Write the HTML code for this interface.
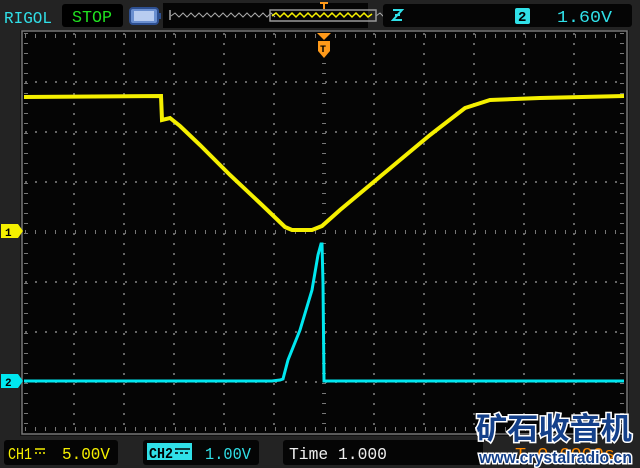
<!DOCTYPE html>
<html><head><meta charset="utf-8"><style>
body{margin:0;background:#202020;width:640px;height:468px;overflow:hidden;font-family:"Liberation Mono",monospace}
svg{display:block}
</style></head><body>
<svg width="640" height="468" viewBox="0 0 640 468" xmlns="http://www.w3.org/2000/svg">
<rect width="640" height="468" fill="#232323"/>
<rect x="20" y="30" width="609" height="406" fill="#111"/>
<rect x="22" y="31" width="605" height="403" fill="#050505" stroke="#777" stroke-width="1.5"/>
<g stroke="#666" stroke-width="2" stroke-dasharray="2 8">
<line x1="25" y1="82" x2="624" y2="82"/>
<line x1="25" y1="132" x2="624" y2="132"/>
<line x1="25" y1="182" x2="624" y2="182"/>
<line x1="25" y1="282" x2="624" y2="282"/>
<line x1="25" y1="332" x2="624" y2="332"/>
<line x1="25" y1="382" x2="624" y2="382"/>
<line x1="74" y1="33" x2="74" y2="432"/>
<line x1="124" y1="33" x2="124" y2="432"/>
<line x1="174" y1="33" x2="174" y2="432"/>
<line x1="224" y1="33" x2="224" y2="432"/>
<line x1="274" y1="33" x2="274" y2="432"/>
<line x1="374" y1="33" x2="374" y2="432"/>
<line x1="424" y1="33" x2="424" y2="432"/>
<line x1="474" y1="33" x2="474" y2="432"/>
<line x1="524" y1="33" x2="524" y2="432"/>
<line x1="574" y1="33" x2="574" y2="432"/>
</g>
<g stroke="#777">
<line x1="25" y1="232" x2="624" y2="232" stroke-dasharray="1 9" stroke-width="4"/>
<line x1="324" y1="33" x2="324" y2="432" stroke-width="4" stroke-dasharray="1 9"/>
<line x1="25" y1="36" x2="624" y2="36" stroke-width="4" stroke-dasharray="1 9"/>
<line x1="25" y1="429" x2="624" y2="429" stroke-width="4" stroke-dasharray="1 9"/>
<line x1="26" y1="33" x2="26" y2="432" stroke-width="4" stroke-dasharray="1 9"/>
<line x1="622" y1="33" x2="622" y2="432" stroke-width="4" stroke-dasharray="1 9"/>
</g>
<polyline fill="none" stroke="#f5f000" stroke-width="4" points="24,97 161,96 162,120 170,118 180,126 200,145 230,175 262,205 285,227 292,230 312,230 322,226 340,210 370,185 400,160 430,135 465,108 490,100 540,98 624,96"/>
<polyline fill="none" stroke="#00e8f0" stroke-width="3" points="24,381 272,381 280,380 283,379 288,360 300,330 312,290 318,255 321,244 322,244 323,283 324,381 330,381 624,381"/>
<path d="M1,224 H18 L23,231 L18,238 H1 Z" fill="#f5f000"/>
<text x="5" y="236" font-size="11" font-weight="bold" fill="#000">1</text>
<path d="M1,374 H18 L23,381 L18,388 H1 Z" fill="#00e8f0"/>
<text x="5" y="386" font-size="11" font-weight="bold" fill="#000">2</text>
<path d="M317,33 H331 L324,40 Z" fill="#ff9a1a"/>
<path d="M318,41 H330 V51 L324,58 L318,51 Z" fill="#ff9a1a"/>
<text x="320" y="52" font-size="10" font-weight="bold" fill="#000">T</text>
<text x="4" y="23" font-size="17" fill="#30e0e8" textLength="48" lengthAdjust="spacingAndGlyphs">RIGOL</text>
<rect x="62" y="4" width="61" height="23" rx="3" fill="#000"/>
<text x="72" y="22" font-size="17" fill="#20e020" textLength="40" lengthAdjust="spacingAndGlyphs">STOP</text>
<rect x="130" y="8" width="28" height="16" rx="3" fill="#6a8fd0" stroke="#2d4f90" stroke-width="2"/>
<rect x="134" y="11" width="20" height="10" fill="#b8ccf0"/>
<rect x="158" y="13" width="3" height="6" fill="#2d4f90"/>
<rect x="163" y="3" width="205" height="25" fill="#050505"/>
<path d="M170,10 v10 M443,10 v10" stroke="#aaa" stroke-width="1.5"/>
<polyline fill="none" stroke="#aaa" stroke-width="1" points="171,16 175,13 179,17 183,13 187,17 191,13 195,17 199,13 203,17 207,13 211,17 215,13 219,17 223,13 227,17 231,13 235,17 239,13 243,17 247,13 251,17 255,13 259,17 263,13 267,17 271,13 275,17"/>
<polyline fill="none" stroke="#aaa" stroke-width="1" points="376,16 380,13 384,17 388,13 392,17 396,13 400,17 404,13 408,17 412,13 416,17 420,13 424,17 428,13 432,17 436,13 440,17 443,15"/>
<rect x="163" y="3" width="205" height="25" fill="none"/>
<rect x="270" y="10" width="106" height="11" fill="none" stroke="#999" stroke-width="1.5"/>
<polyline fill="none" stroke="#f5f000" stroke-width="1.5" points="272,16 276,13 280,17 284,13 288,17 292,13 296,17 300,13 304,17 308,13 312,17 316,13 320,17 324,13 328,17 332,13 336,17 340,13 344,17 348,13 352,17 356,13 360,17 364,13 368,17 372,14"/>
<path d="M320,3 H328 M324,3 V9" stroke="#ff9a1a" stroke-width="2"/>
<rect x="383" y="4" width="249" height="23" rx="3" fill="#050505"/>
<path d="M393,10 h9 l-9,10 h9 M395,15 h5" stroke="#30e0e8" stroke-width="2" fill="none"/>
<rect x="515" y="8" width="15" height="16" rx="2" fill="#30e0e8"/>
<text x="518" y="21" font-size="14" fill="#000" font-weight="bold">2</text>
<text x="557" y="22" font-size="17" fill="#30e0e8" textLength="55" lengthAdjust="spacingAndGlyphs">1.60V</text>
<rect x="4" y="440" width="114" height="25" rx="3" fill="#050505"/>
<text x="8" y="459" font-size="17" fill="#f5f000" textLength="24" lengthAdjust="spacingAndGlyphs">CH1</text>
<path d="M35,449 h10 M35,453 h2 M39,453 h2 M43,453 h2" stroke="#f5f000" stroke-width="1.5"/>
<text x="62" y="459" font-size="17" fill="#f5f000" textLength="48" lengthAdjust="spacingAndGlyphs">5.00V</text>
<rect x="143" y="440" width="116" height="25" rx="3" fill="#050505"/>
<rect x="147" y="443" width="45" height="17" fill="#30e0e8"/>
<text x="149" y="458" font-size="15" fill="#000" font-weight="bold" textLength="24" lengthAdjust="spacingAndGlyphs">CH2</text>
<path d="M175,449 h15 M175,453 h3 M180,453 h3 M185,453 h3" stroke="#000" stroke-width="1.5"/>
<text x="205" y="459" font-size="17" fill="#30e0e8" textLength="46" lengthAdjust="spacingAndGlyphs">1.00V</text>
<rect x="283" y="440" width="200" height="25" rx="3" fill="#050505"/>
<text x="289" y="459" font-size="17" fill="#eee" textLength="98" lengthAdjust="spacingAndGlyphs">Time 1.000</text>
<text x="515" y="459" font-size="17" fill="#ff8a00" textLength="100" lengthAdjust="spacingAndGlyphs">T→0.0000s</text>
<text x="476" y="439" font-size="30" font-weight="bold" fill="#14408a" stroke="#fff" stroke-width="3" paint-order="stroke" font-family="Noto Sans CJK SC,sans-serif" textLength="156" lengthAdjust="spacingAndGlyphs">矿石收音机</text>
<text x="479" y="463" font-size="17" font-weight="bold" fill="#14408a" stroke="#fff" stroke-width="3" paint-order="stroke" font-family="Liberation Sans,sans-serif" textLength="153" lengthAdjust="spacingAndGlyphs">www.crystalradio.cn</text>
</svg>
</body></html>
